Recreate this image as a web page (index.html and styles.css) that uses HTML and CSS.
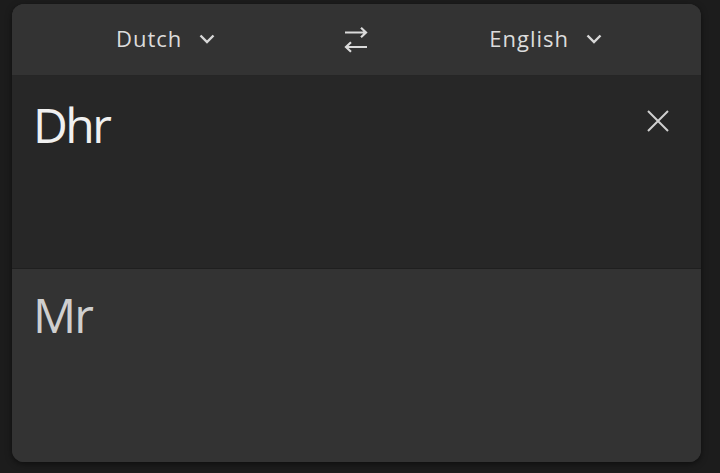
FILE: index.html
```html
<!DOCTYPE html>
<html>
<head>
<meta charset="utf-8">
<link rel="stylesheet" href="styles.css">
</head>
<body>
<div class="card">
  <div class="bar">
    <div class="lang lang-src">
      <span class="lang-name">Dutch</span>
      <svg class="chev" width="16" height="12" viewBox="0 0 16 12"><path d="M1.5 2.5 L8 9 L14.5 2.5" fill="none" stroke="#d8d8d8" stroke-width="2.4"/></svg>
    </div>
    <svg class="swap" width="24" height="26" viewBox="0 0 24 26">
      <path d="M1 5.5 H22 M17 0.8 L22 5.5 L17 10.2" fill="none" stroke="#dadada" stroke-width="2.2"/>
      <path d="M23 20 H2 M7 15.3 L2 20 L7 24.7" fill="none" stroke="#dadada" stroke-width="2.2"/>
    </svg>
    <div class="lang lang-dst">
      <span class="lang-name">English</span>
      <svg class="chev" width="16" height="12" viewBox="0 0 16 12"><path d="M1.5 2.5 L8 9 L14.5 2.5" fill="none" stroke="#d8d8d8" stroke-width="2.4"/></svg>
    </div>
  </div>
  <div class="input">
    <div class="src-text">Dhr</div>
    <svg class="close" width="24" height="24" viewBox="0 0 24 24"><path d="M2 2 L22 22 M22 2 L2 22" fill="none" stroke="#d0d0d0" stroke-width="2"/></svg>
  </div>
  <div class="output">
    <div class="dst-text">Mr</div>
  </div>
</div>
</body>
</html>
```
FILE: styles.css
```css
html, body {
  margin: 0;
  padding: 0;
  background: #1c1c1c;
  width: 720px;
  height: 473px;
  overflow: hidden;
  font-family: "Open Sans", "Noto Sans", sans-serif;
}
.card {
  margin: 4px 0 0 12px;
  width: 689px;
  height: 458px;
  border-radius: 12px;
  overflow: hidden;
  background: #333333;
  display: flex;
  flex-direction: column;
  box-shadow: 0 2px 6px rgba(0,0,0,0.5);
}
.bar {
  height: 68px;
  padding-bottom: 3px;
  flex: none;
  display: flex;
  align-items: center;
  border-bottom: 1px solid #262626;
  background: #333333;
}
.lang {
  display: flex;
  align-items: center;
  gap: 17px;
  color: #dcdcdc;
  font-size: 22px;
  letter-spacing: 1px;
}
.lang-src { margin-left: 104px; }
.lang-dst { margin-left: 121px; }
.swap { margin-left: 129px; margin-top: 3px; }
.chev { margin-top: 2px; }
.input {
  height: 192px;
  flex: none;
  background: #272727;
  border-bottom: 1px solid #1f1f1f;
  display: flex;
  justify-content: space-between;
  align-items: flex-start;
}
.src-text {
  color: #f0f0f0;
  font-size: 48px;
  letter-spacing: -2.5px;
  line-height: 1;
  margin: 25px 0 0 21px;
}
.close {
  margin: 33px 31px 0 0;
}
.output {
  flex: 1;
  background: #333333;
}
.dst-text {
  color: #cfcfcf;
  font-size: 48px;
  letter-spacing: -2px;
  line-height: 1;
  margin: 22px 0 0 21px;
}
```
